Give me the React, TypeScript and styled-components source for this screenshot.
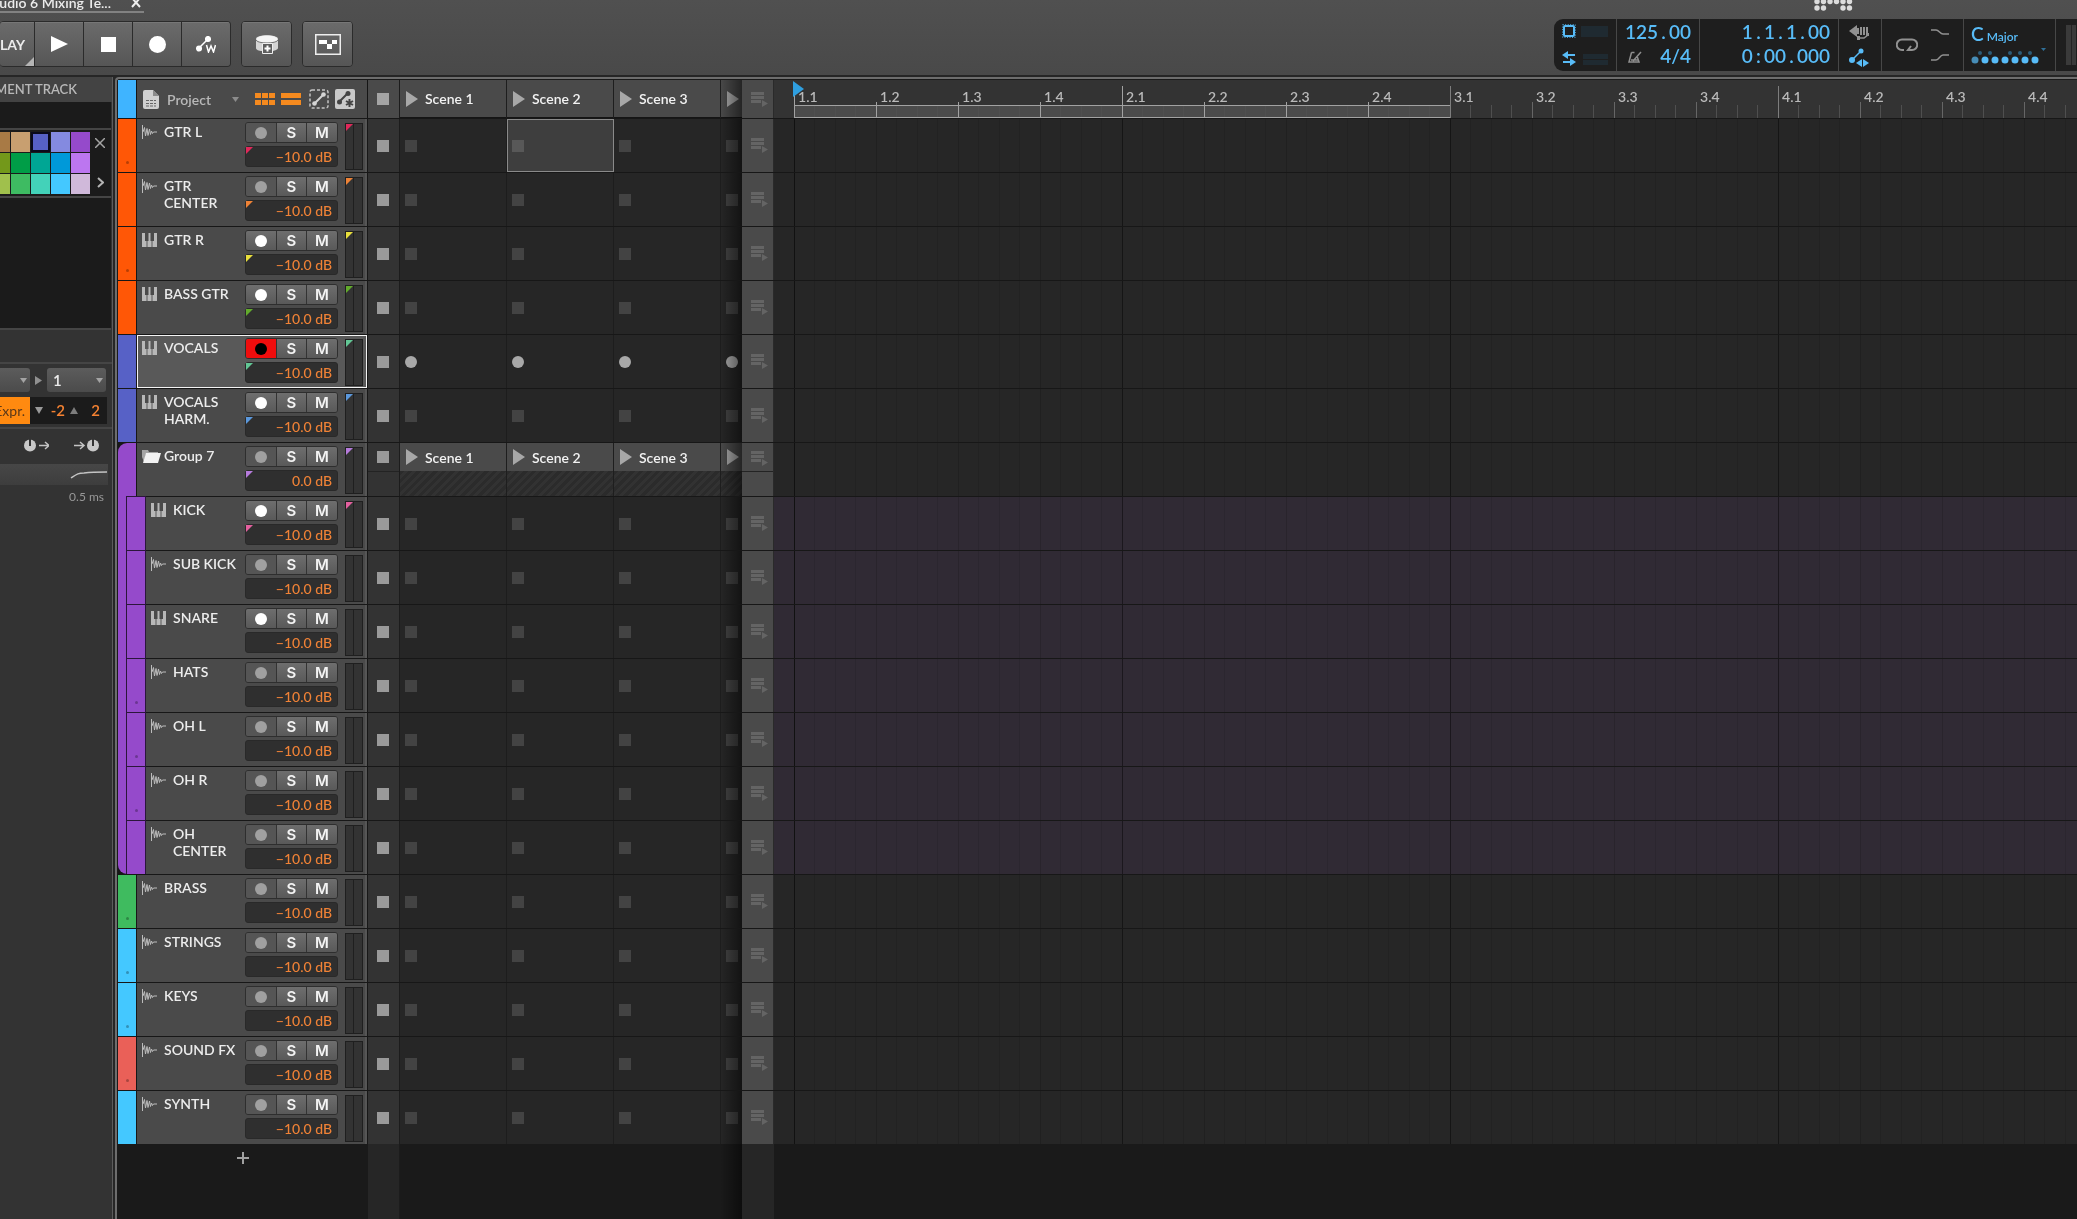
import React from "react";
import styled, { createGlobalStyle, css } from "styled-components";

const GlobalStyle = createGlobalStyle`
  *, *::before, *::after { box-sizing: border-box; }
  body {
    margin: 0;
    background: #1a1a1a;
    color: #ececec;
    font-family: Lato, "Noto Sans", sans-serif;
    font-size: 14px;
    line-height: 17px;
    overflow: hidden;
  }
  button, input, select { font: inherit; color: inherit; margin: 0; padding: 0; border: 0; background: none; border-radius: 0; }
  svg { display: block; flex: none; }
`;

/* ---------- data ---------- */

type Kind = "audio" | "inst" | "group";
interface Track {
  name: string;
  kind: Kind;
  color: string;
  tag?: string;
  armed?: boolean;
  child?: boolean;
  last?: boolean;
  dot?: boolean;
  db?: string;
}

const ORANGE = "#ff5706";
const INDIGO = "#5761c6";
const PURPLE = "#954acb";
const SKY = "#44c8ff";

const tracks: Track[] = [
  { name: "GTR L", kind: "audio", color: ORANGE, tag: "#e0285a", dot: true },
  { name: "GTR CENTER", kind: "audio", color: ORANGE, tag: "#ee8236" },
  { name: "GTR R", kind: "inst", color: ORANGE, tag: "#e9df3c", dot: true },
  { name: "BASS GTR", kind: "inst", color: ORANGE, tag: "#62ab2c" },
  { name: "VOCALS", kind: "inst", color: INDIGO, tag: "#62c795", armed: true },
  { name: "VOCALS HARM.", kind: "inst", color: INDIGO, tag: "#5b98dc" },
  { name: "Group 7", kind: "group", color: PURPLE, tag: "#b67bdc", db: "0.0 dB" },
  { name: "KICK", kind: "inst", color: PURPLE, tag: "#e4609f", child: true },
  { name: "SUB KICK", kind: "audio", color: PURPLE, child: true },
  { name: "SNARE", kind: "inst", color: PURPLE, child: true },
  { name: "HATS", kind: "audio", color: PURPLE, child: true, dot: true },
  { name: "OH L", kind: "audio", color: PURPLE, child: true, dot: true },
  { name: "OH R", kind: "audio", color: PURPLE, child: true, dot: true },
  { name: "OH CENTER", kind: "audio", color: PURPLE, child: true, last: true },
  { name: "BRASS", kind: "audio", color: "#3fbb5f", dot: true },
  { name: "STRINGS", kind: "audio", color: SKY, dot: true },
  { name: "KEYS", kind: "audio", color: SKY, dot: true },
  { name: "SOUND FX", kind: "audio", color: "#ea6058", dot: true },
  { name: "SYNTH", kind: "audio", color: SKY },
];

const scenes = ["Scene 1", "Scene 2", "Scene 3", ""];
const beats = [1, 2, 3, 4].flatMap((bar) => [1, 2, 3, 4].map((beat) => ({ bar, beat })));

const palette = [
  ["#a87a45", "#c89f70", "#5761c6", "#848ae0", "#954acb"],
  ["#73981a", "#009d47", "#00a694", "#0099d9", "#bc76f0"],
  ["#a0c04c", "#3ebb62", "#43d2b9", "#44c8ff", "#d0b9da"],
];

/* ---------- icons ---------- */

const WaveIcon = () => (
  <svg width="15" height="14" viewBox="0 0 15 14" fill="none" stroke="#bcbcbc">
    <path d="M.5 0v14M1 7L2.500 2.500L3.500 11L5 3.500L6 10.500L7.500 4L8.500 9.500L9.500 6L10.500 8.500L11.500 7H15" />
  </svg>
);
const KeysIcon = () => (
  <svg width="15" height="14" viewBox="0 0 15 14">
    <path fill="#b8b8b8" d="M0 0h3v8h1.500V14H0zM5.500 14V8H6.500V0h2v8h1v6zM10.500 14V8H12V0h3v14z" />
    <path fill="#8f8f8f" d="M4.500 8h1v6h-1zM9.500 8h1v6h-1z" />
  </svg>
);
const FolderIcon = () => (
  <svg width="19" height="14" viewBox="0 0 19 14">
    <path fill="#a5a5a5" d="M0 1h6l1 2h9v2H4L2 13 0 8z" />
    <path fill="#f2f2f2" d="M4 4h15l-3 10H1z" />
  </svg>
);
const PlayIcon = ({ w = 12, h = 16, fill = "#a8a8a8" }) => (
  <svg width={w} height={h} viewBox="0 0 12 16" preserveAspectRatio="none">
    <path d="M0 0L12 8L0 16z" fill={fill} />
  </svg>
);
const QueueIcon = () => (
  <svg width="17" height="15" viewBox="0 0 17 15" fill="#646464">
    <path d="M0 0h13v3H0zM0 4h13v3H0zM0 8h10v3H0zM11 8l6 3.500l-6 3.500z" />
  </svg>
);
const Caret = ({ fill = "#8c8c8c" }) => (
  <svg width="7" height="5" viewBox="0 0 7 5">
    <path d="M0 0h7L3.500 5z" fill={fill} />
  </svg>
);

/* ---------- top bar ---------- */

const Page = styled.div`
  display: flex;
  flex-direction: column;
  height: 100vh;
`;
const TopBar = styled.header`
  display: flex;
  justify-content: space-between;
  height: 75px;
  background: linear-gradient(#505050, #494949);
`;
const TopLeft = styled.div`
  display: flex;
  flex-direction: column;
  gap: 8px;
`;
const Tab = styled.div`
  display: flex;
  align-items: flex-end;
  justify-content: flex-end;
  gap: 20px;
  width: 144px;
  height: 13px;
  padding-right: 3px;
  overflow: hidden;
  white-space: nowrap;
  font-weight: 600;
  border-bottom: 2px solid #828282;
`;
const CloseTab = styled.button`
  width: 10px;
  height: 17px;
  display: flex;
  align-items: center;
`;
const Tools = styled.div`
  display: flex;
  gap: 10px;
  height: 46px;
`;
const ToolGroup = styled.div`
  display: flex;
  border: 1px solid #2b2b2b;
  border-radius: 4px;
  overflow: hidden;
  &:first-child { border-left: 0; }
`;
const Tool = styled.button<{ $clip?: boolean }>`
  position: relative;
  display: flex;
  align-items: center;
  justify-content: ${(p) => (p.$clip ? "flex-end" : "center")};
  width: ${(p) => (p.$clip ? 34 : 49)}px;
  padding-right: ${(p) => (p.$clip ? 9 : 0)}px;
  background: linear-gradient(#6b6b6b, #565656);
  box-shadow: inset 0 1px #777;
  font-weight: 700;
  & + & { border-left: 1px solid #2b2b2b; }
`;
const Corner = styled.span`
  position: absolute;
  right: 0;
  bottom: 0;
  border-left: 9px solid transparent;
  border-bottom: 9px solid #b5b5b5;
`;
const TopRight = styled.div`
  display: flex;
  flex-direction: column;
  width: 523px;
`;
const LogoRow = styled.div`
  height: 19px;
  padding-left: 260px;
`;
const Display = styled.div`
  display: flex;
  height: 52px;
  background: #1e1e1e;
  border-radius: 9px 0 0 9px;
  color: #58bcf8;
`;
const Cell = styled.div<{ $w: number }>`
  display: flex;
  align-items: center;
  justify-content: space-evenly;
  width: ${(p) => p.$w}px;
  border-right: 1px solid #474747;
`;
const Readout = styled.div<{ $w: number }>`
  display: flex;
  flex-direction: column;
  justify-content: center;
  width: ${(p) => p.$w}px;
  padding: 0 8px 2px 0;
  border-right: 1px solid #474747;
  font-size: 19px;
  font-weight: 600;
  line-height: 24px;
`;
const Line = styled.div`
  display: flex;
  justify-content: flex-end;
`;
const Metro = styled.button`
  display: flex;
  align-items: center;
  margin-right: 18px;
`;
const Sep = styled.span`
  width: 11px;
  text-align: center;
`;
const KeyCell = styled.button`
  display: flex;
  flex-direction: column;
  justify-content: center;
  gap: 2px;
  width: 92px;
  padding: 0 0 4px 7px;
  border-right: 1px solid #474747;
  font-size: 12px;
  font-weight: 600;
  text-align: left;
`;
const KeyRoot = styled.span`
  font-size: 19px;
  line-height: 24px;
  margin-right: 3px;
`;
const Rail = styled.div`
  width: 10px;
  height: 40px;
  margin: 6px 0 0 10px;
  background: repeating-linear-gradient(90deg, #3a3a3a 0 5px, #242424 5px 6px);
`;

const Digits = ({ text }: { text: string }) => (
  <Line>
    {text.split(/([.:])/).map((part, i) => (/[.:]/.test(part) ? <Sep key={i}>{part}</Sep> : <span key={i}>{part}</span>))}
  </Line>
);

const Header = () => (
  <TopBar>
    <TopLeft>
      <Tab>
        <span>Studio 6 Mixing Te...</span>
        <CloseTab aria-label="Close tab">
          <svg width="10" height="10" viewBox="0 0 10 10" stroke="#eee" strokeWidth="2"><path d="M1 0l8 9M9 0l-8 9" /></svg>
        </CloseTab>
      </Tab>
      <Tools>
        <ToolGroup>
          <Tool $clip>PLAY<Corner /></Tool>
          <Tool aria-label="Play"><PlayIcon w={17} fill="#fff" /></Tool>
          <Tool aria-label="Stop"><svg width="15" height="15"><rect width="15" height="15" fill="#fff" /></svg></Tool>
          <Tool aria-label="Record"><svg width="17" height="17"><circle cx="8.500" cy="8.500" r="8.500" fill="#fff" /></svg></Tool>
          <Tool aria-label="Write automation">
            <svg width="20" height="17" viewBox="0 0 20 17" fill="none" stroke="#fff" strokeWidth="1.500">
              <path d="M3 12L12 3M10.500 9l2 7l2.500-6l2.500 6l2-7" />
              <circle cx="3" cy="12.500" r="2.300" fill="#fff" /><circle cx="12" cy="3" r="2.300" fill="#fff" />
            </svg>
          </Tool>
        </ToolGroup>
        <ToolGroup>
          <Tool aria-label="Overdub clip">
            <svg width="22" height="19" viewBox="0 0 22 19">
              <path fill="#d5d5d5" d="M0 4C0-1 22-1 22 4V13C22 15 17 16 17 16V9H6V16C3 16 0 15 0 13z" />
              <ellipse cx="11" cy="4" rx="10.500" ry="3.500" fill="#f5f5f5" />
              <path fill="none" stroke="#777" d="M0 5C1 9 21 9 22 5" />
              <path fill="#5e5e5e" stroke="#eee" d="M6.500 8.500h10v10h-10z" />
              <path stroke="#fff" strokeWidth="2" d="M11.500 10.500v6M8.500 13.500h6" />
            </svg>
          </Tool>
        </ToolGroup>
        <ToolGroup>
          <Tool aria-label="Launcher overdub">
            <svg width="26" height="21" viewBox="0 0 26 21">
              <path fill="none" stroke="#eee" strokeWidth="1.500" d="M.75.75h24.500v19.500H.75z" />
              <path fill="#fff" d="M4 6h8v4H4zM17 6h5v4h-5zM12 10h5v5h-5z" />
            </svg>
          </Tool>
        </ToolGroup>
      </Tools>
    </TopLeft>
    <TopRight>
      <LogoRow>
        <svg width="39" height="12" viewBox="0 0 39 12" fill="#dcdcdc">
          {[0, 1, 2, 3, 4, 5].map((i) => <circle key={i} cx={3 + i * 6.5} cy="1.500" r="2.700" />)}
          {[0, 1, 4, 5].map((i) => <circle key={i} cx={3 + i * 6.5} cy="8" r="2.700" />)}
        </svg>
      </LogoRow>
      <Display>
        <Cell $w={63}>
          <svg width="46" height="44" viewBox="0 0 46 44">
            <rect x="2" y="3" width="10" height="10" rx="1" fill="none" stroke="#58bcf8" strokeWidth="2" />
            <rect x="0.700" y="1.700" width="12.600" height="12.600" fill="none" stroke="#58bcf8" strokeDasharray="1 1.500" />
            <path fill="#1f2a31" d="M19 3h27v11H19zM21 31h25v5H21zM21 37h25v5H21z" />
            <path fill="none" stroke="#58bcf8" strokeWidth="2" d="M3 32h10M1 39h10" />
            <path fill="#58bcf8" d="M0 32l6-4v8zM14 39l-6-4v8z" />
          </svg>
        </Cell>
        <Readout $w={83}>
          <Digits text="125.00" />
          <Line>
            <Metro aria-label="Metronome">
              <svg width="14" height="13" viewBox="0 0 14 13" fill="none" stroke="#8f8f8f" strokeWidth="1.500">
                <path d="M3.500 2.500L1 12h10L9 6M3.500 2.500h3M5 11l8-9M3 10h7" />
              </svg>
            </Metro>
            4/4
          </Line>
        </Readout>
        <Readout $w={139}>
          <Digits text="1.1.1.00" />
          <Digits text="0:00.000" />
        </Readout>
        <Cell $w={43}>
          <svg width="22" height="44" viewBox="0 0 22 44">
            <path fill="#919191" d="M0 8l8-6v3h2v6H8v3zM11 4h2v8h-2zM14 4h2v8h-2zM17 4h2v8h-2z" />
            <path fill="none" stroke="#919191" strokeWidth="1.500" d="M9 15h6l4-3" />
            <path fill="#919191" d="M8 13h3v4H8zM17 10h3v3h-3z" />
            <path stroke="#58bcf8" strokeWidth="1.500" d="M3 37L12 28" />
            <circle cx="3" cy="37" r="3" fill="#58bcf8" /><circle cx="12" cy="28" r="2.500" fill="#58bcf8" />
            <path fill="#58bcf8" d="M7 40l6-4v8zM20 40l-6-4v8z" />
          </svg>
        </Cell>
        <Cell $w={82}>
          <svg width="22" height="14" viewBox="0 0 22 14" fill="none" stroke="#919191" strokeWidth="2">
            <path d="M8 12H6A5 5 0 0 1 6 1.500H16A5 5 0 0 1 16 12H12M15 8l-3 4h4" />
          </svg>
          <svg width="18" height="32" viewBox="0 0 18 32" fill="none" stroke="#919191" strokeWidth="1.500">
            <path d="M0 1h5C8 1 9 5 12 5h6M0 31h5C8 31 9 26 12 26h6" />
          </svg>
        </Cell>
        <KeyCell>
          <span><KeyRoot>C</KeyRoot>Major</span>
          <svg width="76" height="17" viewBox="0 0 76 17" fill="#58bcf8">
            {[0, 1, 2, 3, 4, 5, 6].map((i) => <circle key={i} cx={4 + i * 10} cy="12" r="3.500" fillOpacity={i ? 1 : 0.7} />)}
            {[1, 2, 4, 5, 6].map((i) => <circle key={i} cx={i * 10 - 1} cy="5" r="2" fill="#2c5b78" />)}
            <path d="M70 0h5l-2.500 3z" fill="#2f6f98" />
          </svg>
        </KeyCell>
        <Rail />
      </Display>
    </TopRight>
  </TopBar>
);

/* ---------- inspector ---------- */

const Body = styled.div`
  display: flex;
  flex: 1;
  min-height: 0;
  background: #262626;
  padding-top: 2px;
`;
const Side = styled.aside`
  display: flex;
  flex-direction: column;
  width: 113px;
  margin-right: 2px;
  background: #333;
  border-right: 1px solid #5c5c5c;
`;
const SideTitle = styled.div`
  display: flex;
  justify-content: flex-end;
  height: 25px;
  padding: 4px 35px 0 0;
  overflow: hidden;
  white-space: nowrap;
  background: #434343;
  color: #b8b8b8;
  font-size: 13px;
  font-weight: 600;
`;
const Well = styled.div<{ $h: number }>`
  height: ${(p) => p.$h}px;
  margin-right: 1px;
  background: #1b1b1b;
  border-bottom: 2px solid #454545;
`;
const PaletteBox = styled.div`
  display: flex;
  height: 68px;
  padding-top: 2px;
  margin-right: 1px;
  background: #1b1b1b;
  border-bottom: 2px solid #454545;
`;
const Swatches = styled.div`
  display: grid;
  grid-template-columns: 10px repeat(4, 19px);
  grid-auto-rows: 20px;
  gap: 1px;
`;
const Swatch = styled.button<{ $c: string; $on: boolean }>`
  background: ${(p) => p.$c};
  ${(p) => p.$on && css`border: 2px solid #0a0a1c;`}
`;
const PaletteSide = styled.div`
  display: flex;
  flex-direction: column;
  justify-content: space-between;
  align-items: center;
  flex: 1;
  padding: 6px 2px 8px 0;
`;
const IconButton = styled.button`
  display: flex;
`;
const Section = styled.div<{ $h: number }>`
  display: flex;
  flex-direction: column;
  height: ${(p) => p.$h}px;
  border-bottom: 2px solid #454545;
`;
const Controls = styled.div`
  display: flex;
  align-items: center;
  gap: 5px;
  height: 24px;
  margin: 4px 5px 0 0;
`;
const Drop = styled.label<{ $w: number; $clip?: boolean }>`
  display: flex;
  align-items: center;
  justify-content: space-between;
  width: ${(p) => p.$w}px;
  height: 24px;
  padding: 0 3px 0 ${(p) => (p.$clip ? 0 : 6)}px;
  background: linear-gradient(#5c5c5c, #4b4b4b);
  border-radius: ${(p) => (p.$clip ? "0 3px 3px 0" : "3px")};
  select { appearance: none; font-size: 15px; font-weight: 600; flex: 1; min-width: 0; outline: 0; }
`;
const ExprRow = styled.div`
  display: flex;
  align-items: center;
  gap: 5px;
  height: 27px;
  margin: 5px 5px 0 0;
  padding-right: 7px;
  background: #1b1b1b;
  color: #f58232;
  font-size: 15px;
  font-weight: 600;
`;
const Expr = styled.button`
  display: flex;
  justify-content: flex-end;
  align-items: center;
  align-self: stretch;
  width: 30px;
  padding-right: 5px;
  overflow: hidden;
  background: #ff8a10;
  color: #59381a;
  font-size: 14px;
  font-weight: 400;
`;
const Num = styled.span`
  flex: 1;
  text-align: right;
`;
const Knobs = styled.div`
  display: flex;
  justify-content: flex-end;
  gap: 25px;
  padding: 10px 13px 0 0;
`;
const CurveBand = styled.div`
  display: flex;
  justify-content: flex-end;
  align-items: center;
  height: 21px;
  margin: 12px 4px 0 0;
  background: linear-gradient(#474747, #3d3d3d);
`;
const Delay = styled.div`
  padding: 3px 8px 0 0;
  text-align: right;
  color: #989898;
  font-size: 12px;
`;

const Inspector = () => (
  <Side>
    <SideTitle>INSTRUMENT TRACK</SideTitle>
    <Well $h={28} />
    <PaletteBox>
      <Swatches>
        {palette.flat().map((c, i) => <Swatch key={c} $c={c} $on={i === 2} aria-label={`Colour ${c}`} />)}
      </Swatches>
      <PaletteSide>
        <IconButton aria-label="Close palette">
          <svg width="10" height="10" viewBox="0 0 10 10" stroke="#a4a4a4" strokeWidth="1.500"><path d="M0 0l10 10M10 0L0 10" /></svg>
        </IconButton>
        <IconButton aria-label="More colours">
          <svg width="8" height="11" viewBox="0 0 8 11" fill="none" stroke="#b4b4b4" strokeWidth="2"><path d="M2 1l5 4.500L2 10" /></svg>
        </IconButton>
      </PaletteSide>
    </PaletteBox>
    <Well $h={132} />
    <Section $h={34} />
    <Section $h={65}>
      <Controls>
        <Drop $w={30} $clip>
          <select aria-label="Input"><option></option></select>
          <Caret fill="#a4a4a4" />
        </Drop>
        <PlayIcon w={7} h={9} fill="#909090" />
        <Drop $w={59}>
          <select aria-label="Channel"><option>1</option></select>
          <Caret fill="#a4a4a4" />
        </Drop>
      </Controls>
      <ExprRow>
        <Expr>Expr.</Expr>
        <svg width="8" height="7" viewBox="0 0 8 7" fill="#9a9a9a"><path d="M0 0h8L4 7z" /></svg>
        <Num>-2</Num>
        <svg width="8" height="7" viewBox="0 0 8 7" fill="#7d7d7d"><path d="M0 7h8L4 0z" /></svg>
        <Num>2</Num>
      </ExprRow>
    </Section>
    <Knobs>
      {[false, true].map((flip) => (
        <svg key={String(flip)} width="25" height="13" viewBox="0 0 25 13">
          <g fill="none" stroke="#c4c4c4" strokeWidth="1.500">
            <path d={flip ? "M0 6.500h9M6 3l4 3.500L6 10" : "M15 6.500h9M21 3l4 3.500L21 10"} />
          </g>
          <circle cx={flip ? 19 : 6} cy="6.500" r="6" fill="#c8c8c8" />
          <path d={flip ? "M19 0v7" : "M6 0v7"} stroke="#333" strokeWidth="2" />
        </svg>
      ))}
    </Knobs>
    <CurveBand>
      <svg width="38" height="8" viewBox="0 0 38 8" fill="none" stroke="#c4c4c4" strokeWidth="1.500">
        <path d="M1 7C7 3 8 2 14 2C22 1 28 1 37 1" />
      </svg>
    </CurveBand>
    <Delay>0.5 ms</Delay>
  </Side>
);

/* ---------- arrangement ---------- */

const columns = "18px 1px 230px 1px 31px 343px 32px minmax(0, 1fr)";

const Board = styled.main`
  display: flex;
  flex-direction: column;
  flex: 1;
  min-width: 0;
  background: #1a1a1a;
  border-top: 2px solid #6d6d6d;
  border-left: 2px solid #6d6d6d;
  border-top-left-radius: 4px;
  padding: 1px 0 0 1px;
`;
const HeadRow = styled.div`
  display: grid;
  grid-template-columns: ${columns};
  height: 38px;
  background: #151515;
`;
const HeadStrip = styled.div`
  background: #3fb4ff;
`;
const ProjectBar = styled.div`
  display: flex;
  align-items: center;
  gap: 6px;
  padding: 0 12px 0 6px;
  background: #4a4a4a;
`;
const ProjectPick = styled.label`
  display: flex;
  align-items: center;
  flex: 1;
  color: #b8b8b8;
  margin-right: 10px;
  select { appearance: none; flex: 1; outline: 0; padding-left: 2px; font-weight: 600; }
`;
const StopHead = styled.button`
  display: flex;
  align-items: center;
  padding-left: 9px;
  background: #4a4a4a;
`;
const SceneStrip = styled.div`
  position: relative;
  display: flex;
  overflow: hidden;
  border-left: 1px solid #1c1c1c;
  &::after {
    content: "";
    position: absolute;
    inset: 0 0 0 auto;
    width: 22px;
    background: linear-gradient(90deg, transparent, rgba(0, 0, 0, 0.5));
    pointer-events: none;
  }
`;
const SceneCol = styled.div`
  display: flex;
  flex-direction: column;
  flex: none;
  width: 107px;
  border-right: 1px solid #1e1e1e;
`;
const SceneButton = styled.button<{ $h: number }>`
  display: flex;
  align-items: center;
  gap: 7px;
  height: ${(p) => p.$h}px;
  padding-left: 6px;
  background: #4a4a4a;
  color: #f2f2f2;
  font-weight: 600;
`;
const Hatch = styled.div`
  flex: 1;
  background: repeating-linear-gradient(135deg, #2b2b2b 0 3px, #323232 3px 6px);
`;
const QueueHead = styled.button`
  display: flex;
  align-items: center;
  padding-left: 9px;
  background: #4a4a4a;
  border-right: 1px solid #2a2a2a;
`;
const Ruler = styled.div`
  position: relative;
  display: flex;
  overflow: hidden;
  padding-left: 20px;
  background: #333;
`;
const LoopRange = styled.div`
  position: absolute;
  left: 20px;
  bottom: 0;
  width: 657px;
  height: 13px;
  background: #4b4b4b;
  border: 1px solid #a2a2a2;
`;
const Playhead = styled.svg`
  position: absolute;
  left: 19px;
  top: 1px;
`;
const Beat = styled.div<{ $bar: boolean; $loop: boolean }>`
  position: relative;
  flex: none;
  display: flex;
  flex-direction: column;
  justify-content: space-between;
  width: 82px;
  padding-top: 8px;
  color: #b9b9b9;
  font-weight: 600;
  span { padding-left: 4px; }
  &::before {
    content: "";
    position: absolute;
    left: 0;
    bottom: 0;
    width: 1px;
    height: ${(p) => (p.$bar ? 32 : 16)}px;
    background: ${(p) => (p.$loop ? "#a2a2a2" : p.$bar ? "#7d7d7d" : "#666")};
  }
`;
const Ticks = styled.div`
  height: 13px;
  background:
    linear-gradient(#4f4f4f, #4f4f4f) 20px 0 / 1px 100% no-repeat,
    linear-gradient(#4f4f4f, #4f4f4f) 41px 0 / 1px 100% no-repeat,
    linear-gradient(#4f4f4f, #4f4f4f) 61px 0 / 1px 100% no-repeat;
  mix-blend-mode: lighten;
`;

const Row = styled.div`
  display: grid;
  grid-template-columns: ${columns};
  height: 54px;
  background: #171717;
  border-top: 1px solid #171717;
`;
const Spine = styled.div<{ $c: string; $shape?: "top" | "bottom" | "none" }>`
  position: relative;
  background: ${(p) => p.$c};
  border-top-left-radius: ${(p) => (p.$shape === "top" ? 9 : 0)}px;
  border-bottom-left-radius: ${(p) => (p.$shape === "bottom" ? 9 : 0)}px;
`;
const ChildSpine = styled(Spine)`
  grid-column: 1 / 3;
  margin-top: -1px;
`;
const StripDot = styled.span<{ $child?: boolean }>`
  position: absolute;
  left: ${(p) => (p.$child ? 17 : 8)}px;
  bottom: 8px;
  width: 3px;
  height: 3px;
  border-radius: 2px;
  background: rgba(0, 0, 0, 0.28);
`;
const ChildStrip = styled.div<{ $c: string }>`
  position: absolute;
  inset: 0 -9px 0 8px;
  background: ${(p) => p.$c};
  border: solid #2c163c;
  border-width: 1px 1px 0 1px;
`;
const TrackHead = styled.div<{ $armed?: boolean; $child?: boolean }>`
  display: flex;
  padding: 0 0 0 ${(p) => (p.$child ? 14 : 5)}px;
  background: ${(p) => (p.$armed ? "#595959" : "#4a4a4a")};
  outline: ${(p) => (p.$armed ? "1px solid #f4f4f4" : "0")};
  outline-offset: -1px;
  border-right: 2px solid #565656;
`;
const Icon = styled.div`
  width: 22px;
  padding-top: 6px;
`;
const Name = styled.div`
  flex: 1;
  padding-top: 4px;
  font-weight: 600;
`;
const Mixer = styled.div`
  display: flex;
  flex-direction: column;
  gap: 3px;
  width: 93px;
  padding-top: 3px;
`;
const Buttons = styled.div`
  display: grid;
  grid-template-columns: 30px 30px 31px;
  height: 21px;
  border: 1px solid #2e2e2e;
  border-radius: 3px;
  overflow: hidden;
`;
const MixButton = styled.button<{ $bg?: string }>`
  display: flex;
  align-items: center;
  justify-content: center;
  background: ${(p) => p.$bg || "linear-gradient(#6e6e6e, #595959)"};
  color: #f4f4f4;
  font-family: Inter, Lato, sans-serif;
  font-size: 15px;
  font-weight: 600;
  & + & { border-left: 1px solid #333; }
`;
const RecDot = styled.span<{ $c: string }>`
  width: 12px;
  height: 12px;
  border-radius: 6px;
  background: ${(p) => p.$c};
`;
const Tag = styled.span<{ $c: string }>`
  position: absolute;
  left: 0;
  top: 0;
  border-top: 7px solid ${(p) => p.$c};
  border-right: 7px solid transparent;
`;
const VolumeBox = styled.div`
  position: relative;
  height: 21px;
  background: #2f2f2f;
  border: 1px solid #292929;
  border-radius: 3px;
  input {
    display: block;
    width: 100%;
    height: 19px;
    padding-right: 5px;
    text-align: right;
    color: #f08236;
    font-weight: 500;
    outline: 0;
  }
`;
const Meter = styled.div`
  position: relative;
  width: 18px;
  height: 47px;
  margin: 4px 2px 0 7px;
  border: 1px solid #1f1f1f;
  background: linear-gradient(90deg, #333 0 7px, #1f1f1f 7px 8px, #333 8px);
`;
const StopCell = styled.button<{ $group?: boolean }>`
  display: flex;
  align-items: ${(p) => (p.$group ? "flex-start" : "center")};
  padding: ${(p) => (p.$group ? "8px 0 0 9px" : "0 0 0 9px")};
  background: ${(p) => (p.$group ? "linear-gradient(#333 28px, #232323 28px 29px, #333 29px)" : "#333")};
`;
const Square = styled.span<{ $c: string }>`
  width: 12px;
  height: 12px;
  background: ${(p) => p.$c};
`;
const Clip = styled.button<{ $on?: boolean }>`
  display: flex;
  align-items: center;
  flex: none;
  width: 107px;
  padding-left: ${(p) => (p.$on ? 4 : 5)}px;
  background: ${(p) => (p.$on ? "#3e3e3e" : "#262626")};
  border-right: 1px solid #1d1d1d;
  ${(p) => p.$on && css`border: 1px solid #8a8a8a;`}
`;
const QueueCell = styled.button<{ $group?: boolean }>`
  display: flex;
  align-items: ${(p) => (p.$group ? "flex-start" : "center")};
  padding: ${(p) => (p.$group ? "8px 0 0 9px" : "0 0 0 9px")};
  border-right: 1px solid #2a2a2a;
  background: ${(p) => (p.$group ? "linear-gradient(#4a4a4a 28px, #232323 28px 29px, #4a4a4a 29px)" : "#4a4a4a")};
`;
const Lane = styled.div<{ $tint?: boolean }>`
  padding-left: 20px;
  background: ${(p) => (p.$tint ? "#302a34" : "#262626")};
`;
const Grid = styled.div`
  height: 100%;
  border-left: 1px solid #111;
  background-origin: border-box;
  background-size: 328px 100%, 82px 100%;
  background-image:
    linear-gradient(90deg, rgba(0, 0, 0, 0.35) 1px, transparent 1px),
    linear-gradient(90deg, rgba(0, 0, 0, 0.15) 1px, transparent 1px 20px, rgba(0, 0, 0, 0.1) 20px 21px, transparent 21px 41px, rgba(0, 0, 0, 0.1) 41px 42px, transparent 42px 61px, rgba(0, 0, 0, 0.1) 61px 62px, transparent 62px);
`;
const Filler = styled.div`
  display: grid;
  grid-template-columns: ${columns};
  flex: 1;
`;
const AddTrack = styled.button`
  grid-column: 1 / 4;
  display: flex;
  justify-content: center;
  padding-top: 8px;
`;
const Dim = styled.div`
  background: #262626;
`;

const TrackRow = ({ t, index }: { t: Track; index: number }) => {
  const group = t.kind === "group";
  return (
    <Row>
      {t.child ? (
        <ChildSpine $c={t.color} $shape={t.last ? "bottom" : "none"}>
          <ChildStrip $c={t.color} />
          {t.dot && <StripDot $child />}
        </ChildSpine>
      ) : (
        <>
          <Spine $c={t.color} $shape={group ? "top" : "none"}>{t.dot && <StripDot />}</Spine>
          <span />
        </>
      )}
      <TrackHead $armed={t.armed} $child={t.child}>
        <Icon>{group ? <FolderIcon /> : t.kind === "inst" ? <KeysIcon /> : <WaveIcon />}</Icon>
        <Name>{t.name}</Name>
        <Mixer>
          <Buttons>
            <MixButton aria-label={`Arm ${t.name}`} $bg={t.armed ? "#f00d0d" : t.kind === "inst" ? undefined : "#555"}>
              <RecDot $c={t.armed ? "#000" : t.kind === "inst" ? "#fff" : "#a0a0a0"} />
            </MixButton>
            <MixButton>S</MixButton>
            <MixButton>M</MixButton>
          </Buttons>
          <VolumeBox>
            <input aria-label={`${t.name} volume`} defaultValue={t.db || "−10.0 dB"} />
            {t.tag && <Tag $c={t.tag} />}
          </VolumeBox>
        </Mixer>
        <Meter>{t.tag && <Tag $c={t.tag} />}</Meter>
      </TrackHead>
      <span />
      <StopCell $group={group} aria-label={`Stop ${t.name}`}><Square $c="#9a9a9a" /></StopCell>
      <SceneStrip>
        {scenes.map((s, i) =>
          group ? (
            <SceneCol key={i}>
              <SceneButton $h={28} aria-label={s || "Scene 4"}><PlayIcon />{s}</SceneButton>
              <Hatch />
            </SceneCol>
          ) : (
            <Clip key={i} $on={index === 0 && i === 1} aria-label={`${t.name} slot ${i + 1}`}>
              {t.armed ? <RecDot $c="#a8a8a8" /> : <Square $c={index === 0 && i === 1 ? "#585858" : "#434343"} />}
            </Clip>
          )
        )}
      </SceneStrip>
      <QueueCell $group={group} aria-label={`Return ${t.name} to arrangement`}><QueueIcon /></QueueCell>
      <Lane $tint={t.child}><Grid /></Lane>
    </Row>
  );
};

export default function App() {
  return (
    <Page>
      <GlobalStyle />
      <Header />
      <Body>
        <Inspector />
        <Board>
          <HeadRow>
            <HeadStrip />
            <span />
            <ProjectBar>
              <svg width="16" height="19" viewBox="0 0 16 19">
                <path fill="#d0d0d0" d="M0 2a2 2 0 0 1 2-2h8l6 6v11a2 2 0 0 1-2 2H2a2 2 0 0 1-2-2z" />
                <path fill="#8b8b8b" d="M10 0l6 6h-6z" />
                <path stroke="#666" strokeDasharray="3 1" d="M3 10.500h10M3 13.500h10M3 16h10" />
              </svg>
              <ProjectPick>
                <select aria-label="Track view"><option>Project</option></select>
                <Caret />
              </ProjectPick>
              <IconButton aria-label="Launcher view">
                <svg width="20" height="12" viewBox="0 0 20 12" fill="#f58a1f">
                  {[0, 7, 14].map((x) => <path key={x} d={`M${x} 0h6v5h-6zM${x} 7h6v5h-6z`} />)}
                </svg>
              </IconButton>
              <IconButton aria-label="Arranger view">
                <svg width="20" height="12" viewBox="0 0 20 12" fill="#f58a1f"><path d="M0 0h20v5H0zM0 7h20v5H0z" /></svg>
              </IconButton>
              <IconButton aria-label="Automation">
                <svg width="22" height="20" viewBox="-2 0 22 20">
                  <rect x="1" y="1" width="18" height="18" rx="2" fill="none" stroke="#c4c4c4" strokeWidth="1.500" strokeDasharray="3 2" />
                  <path stroke="#d4d4d4" strokeWidth="2" d="M5 15L15 5" />
                  <circle cx="5.500" cy="14.500" r="2.300" fill="#d4d4d4" /><circle cx="14.500" cy="5.500" r="2.300" fill="#d4d4d4" />
                </svg>
              </IconButton>
              <IconButton aria-label="Automation follow">
                <svg width="20" height="20" viewBox="0 0 20 20">
                  <rect width="20" height="20" rx="2" fill="#cacaca" />
                  <path stroke="#444" strokeWidth="2" d="M4 13L13 4M14.500 10v8M11 12l7 4M18 12l-7 4" />
                  <circle cx="4.500" cy="13" r="2.500" fill="#444" /><circle cx="13" cy="4.500" r="2.500" fill="#444" />
                </svg>
              </IconButton>
            </ProjectBar>
            <span />
            <StopHead aria-label="Stop all clips"><Square $c="#a4a4a4" /></StopHead>
            <SceneStrip>
              {scenes.map((s, i) => (
                <SceneCol key={i}><SceneButton $h={37} aria-label={s || "Scene 4"}><PlayIcon />{s}</SceneButton></SceneCol>
              ))}
            </SceneStrip>
            <QueueHead aria-label="Return all to arrangement"><QueueIcon /></QueueHead>
            <Ruler>
              <LoopRange />
              {beats.map(({ bar, beat }) => (
                <Beat key={`${bar}.${beat}`} $bar={beat === 1} $loop={bar < 3}>
                  <span>{bar}.{beat}</span>
                  <Ticks />
                </Beat>
              ))}
              <Playhead width="11" height="16" viewBox="0 0 11 16"><path d="M0 0l11 8L0 16z" fill="#2f9fe0" /></Playhead>
            </Ruler>
          </HeadRow>
          {tracks.map((t, i) => <TrackRow key={t.name} t={t} index={i} />)}
          <Filler>
            <AddTrack aria-label="Add track">
              <svg width="12" height="12" viewBox="0 0 12 12" stroke="#a0a0a0" strokeWidth="2"><path d="M6 0v12M0 6h12" /></svg>
            </AddTrack>
            <span />
            <Dim />
            <SceneStrip />
            <Dim />
          </Filler>
        </Board>
      </Body>
    </Page>
  );
}
